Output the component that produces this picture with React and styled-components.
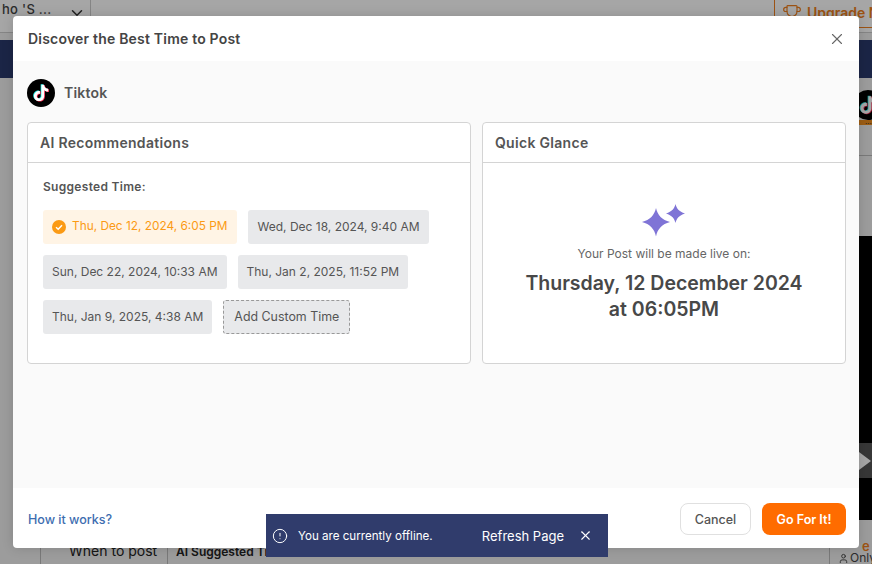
import React from "react";
import styled, { createGlobalStyle } from "styled-components";
import { ChevronDown, Trophy, User, X, CircleAlert } from "lucide-react";

const TIKTOK_PATH =
  "M12.525.02c1.31-.02 2.61-.01 3.91-.02.08 1.53.63 3.09 1.75 4.17 1.12 1.11 2.7 1.62 4.24 1.79v4.03c-1.44-.05-2.89-.35-4.2-.97-.57-.26-1.1-.59-1.62-.93-.01 2.92.01 5.84-.02 8.75-.08 1.4-.54 2.79-1.35 3.94-1.31 1.92-3.58 3.17-5.91 3.21-1.43.08-2.86-.31-4.08-1.03-2.02-1.19-3.44-3.37-3.65-5.71-.02-.5-.03-1-.01-1.49.18-1.9 1.12-3.72 2.58-4.96 1.66-1.44 3.98-2.13 6.15-1.72.02 1.48-.04 2.96-.04 4.44-.99-.32-2.15-.23-3.02.37-.63.41-1.11 1.04-1.36 1.75-.21.51-.15 1.07-.14 1.61.24 1.64 1.82 3.02 3.5 2.87 1.12-.01 2.19-.66 2.77-1.61.19-.33.4-.67.41-1.06.1-1.79.06-3.57.07-5.36.01-4.03-.01-8.05.02-12.07z";

const times = [
  { label: "Thu, Dec 12, 2024, 6:05 PM", selected: true },
  { label: "Wed, Dec 18, 2024, 9:40 AM" },
  { label: "Sun, Dec 22, 2024, 10:33 AM" },
  { label: "Thu, Jan 2, 2025, 11:52 PM" },
  { label: "Thu, Jan 9, 2025, 4:38 AM" },
];

const TiktokLogo = ({ size }) => (
  <svg width={size} height={size} viewBox="0 0 28 28">
    <circle cx="14" cy="14" r="14" fill="#000" />
    <g transform="translate(5.9 5.8) scale(0.68)">
      <path d={TIKTOK_PATH} fill="#25f4ee" transform="translate(-1.1 -0.7)" />
      <path d={TIKTOK_PATH} fill="#fe2c55" transform="translate(1.1 0.7)" />
      <path d={TIKTOK_PATH} fill="#fff" />
    </g>
  </svg>
);

const Sparkles = () => (
  <svg width="46" height="34" viewBox="0 0 46 34">
    <path
      d="M15 5 C16.5 12 21 17 29 19 C21 21 16.5 26 15 33.5 C13.5 26 9 21 1 19 C9 17 13.5 12 15 5 Z"
      fill="#7f74d6"
    />
    <path
      d="M34.5 1 C35.5 5.5 38 8.5 44 10.5 C38 12.5 35.5 15.5 34.5 20 C33.5 15.5 31 12.5 25 10.5 C31 8.5 33.5 5.5 34.5 1 Z"
      fill="#7f74d6"
    />
  </svg>
);

const CheckBadge = () => (
  <svg width="14" height="14" viewBox="0 0 14 14">
    <circle cx="7" cy="7" r="7" fill="#fb9a14" />
    <path d="M4 7.2 L6.2 9.3 L10 5.2" fill="none" stroke="#fff" strokeWidth="1.4" />
  </svg>
);

const App = () => (
  <Page>
    <GlobalStyle />
    <TopBar>
      <Workspace>
        <WorkspaceName>ho 'S ...</WorkspaceName>
        <ChevronDown size={18} color="#333" />
      </Workspace>
      <UpgradeButton>
        <Trophy size={20} strokeWidth={1.4} />
        Upgrade Now
      </UpgradeButton>
    </TopBar>
    <NavyBar />
    <Main>
      <SideColumn>
        <SideLogo>
          <TiktokLogo size={30} />
        </SideLogo>
        <SideStrip>...</SideStrip>
        <SideDivider />
        <VideoBlock>
          <PlayBox />
        </VideoBlock>
      </SideColumn>
    </Main>
    <BottomBar>
      <BottomTab>When to post</BottomTab>
      <BottomTabStrong>AI Suggested Time</BottomTabStrong>
      <BottomNote>
        <SideLabel>e</SideLabel>
        <OnlyRow>
          <User size={11} />
          Only
        </OnlyRow>
      </BottomNote>
    </BottomBar>
    <Overlay />
    <Modal>
      <ModalHeader>
        <ModalTitle>Discover the Best Time to Post</ModalTitle>
        <CloseButton>
          <X size={18} strokeWidth={1.5} />
        </CloseButton>
      </ModalHeader>
      <ModalBody>
        <Platform>
          <TiktokLogo size={28} />
          <PlatformName>Tiktok</PlatformName>
        </Platform>
        <Cards>
          <Card>
            <CardHeader>AI Recommendations</CardHeader>
            <RecommendBody>
              <SuggestLabel>Suggested Time:</SuggestLabel>
              <Chips>
                {times.map((t) => (
                  <Chip key={t.label} $selected={t.selected}>
                    {t.selected && <CheckBadge />}
                    {t.label}
                  </Chip>
                ))}
                <CustomChip>Add Custom Time</CustomChip>
              </Chips>
            </RecommendBody>
          </Card>
          <Card>
            <CardHeader>Quick Glance</CardHeader>
            <GlanceBody>
              <Sparkles />
              <GlanceText>Your Post will be made live on:</GlanceText>
              <GlanceDate>
                Thursday, 12 December 2024
                <br />
                at 06:05PM
              </GlanceDate>
            </GlanceBody>
          </Card>
        </Cards>
      </ModalBody>
      <ModalFooter>
        <HelpLink>How it works?</HelpLink>
        <FooterActions>
          <CancelButton>Cancel</CancelButton>
          <PrimaryButton>Go For It!</PrimaryButton>
        </FooterActions>
      </ModalFooter>
    </Modal>
    <Toast>
      <CircleAlert size={16} strokeWidth={1.5} />
      <ToastText>You are currently offline.</ToastText>
      <RefreshLink>Refresh Page</RefreshLink>
      <X size={15} strokeWidth={1.8} />
    </Toast>
  </Page>
);

export default App;

const GlobalStyle = createGlobalStyle`
  html, body {
    margin: 0;
    padding: 0;
    background: #f0f0f0;
  }
  * {
    box-sizing: border-box;
  }
`;

const Page = styled.div`
  position: relative;
  width: 872px;
  height: 564px;
  overflow: hidden;
  display: flex;
  flex-direction: column;
  background: #f0f0f0;
  font-family: Inter, "Liberation Sans", sans-serif;
  color: #444;
`;

const TopBar = styled.div`
  height: 33px;
  flex: none;
  display: flex;
  justify-content: space-between;
  align-items: flex-start;
  background: #fff;
  border-bottom: 1px solid #ccc;
  margin-bottom: 7px;
`;

const Workspace = styled.div`
  width: 91px;
  height: 32px;
  padding: 1px 4px 0 2px;
  display: flex;
  justify-content: space-between;
  align-items: flex-start;
  border-right: 1px solid #ccc;
  font-size: 13px;
  font-weight: 500;

  svg {
    margin-top: 3px;
  }
`;

const WorkspaceName = styled.span`
  white-space: nowrap;
  letter-spacing: 0.3px;
`;

const UpgradeButton = styled.div`
  width: 98px;
  height: 28px;
  padding: 4px 0 0 7px;
  display: flex;
  align-items: flex-start;
  gap: 5px;
  white-space: nowrap;
  overflow: hidden;
  border-left: 1px solid #f08020;
  border-bottom: 1px solid #f08020;
  color: #f08020;
  font-size: 14px;
  font-weight: 600;

  svg {
    flex: none;
  }
`;

const NavyBar = styled.div`
  height: 38px;
  flex: none;
  background: #2a3a6c;
`;

const Main = styled.div`
  flex: 1;
  display: flex;
  justify-content: flex-end;
  min-height: 0;
`;

const SideColumn = styled.div`
  width: 13px;
  display: flex;
  flex-direction: column;
  overflow: hidden;
`;

const SideLogo = styled.div`
  height: 42px;
  flex: none;
  padding-top: 12px;
  margin-left: -6px;
`;

const SideStrip = styled.div`
  height: 5px;
  flex: none;
  background: #f09020;
  color: #333;
  font-size: 8px;
  line-height: 2px;
  padding-left: 6px;
`;

const SideDivider = styled.div`
  height: 1px;
  flex: none;
  margin: 30px 0 80px;
  background: #bbb;
`;

const VideoBlock = styled.div`
  height: 284px;
  flex: none;
  padding-top: 207px;
  background: #000;
`;

const PlayBox = styled.div`
  height: 35px;
  display: flex;
  align-items: center;
  background: #555;

  &::before {
    content: "";
    border-style: solid;
    border-width: 9px 0 9px 12px;
    border-color: transparent transparent transparent #fff;
  }
`;

const BottomBar = styled.div`
  height: 24px;
  flex: none;
  display: flex;
  align-items: flex-start;
  margin-left: 40px;
  padding-left: 28px;
  border-left: 1px solid #bbb;
  font-size: 14px;
`;

const BottomTab = styled.span`
  width: 99px;
  height: 24px;
  margin-right: 8px;
  padding-top: 2px;
  border-right: 1px solid #bbb;
  color: #222;
`;

const BottomTabStrong = styled.span`
  padding-top: 4px;
  color: #222;
  font-size: 12px;
  font-weight: 600;
  white-space: nowrap;
`;

const BottomNote = styled.div`
  margin-left: auto;
  width: 43px;
  height: 24px;
  padding-left: 8px;
  border-left: 1px solid #bbb;
  display: flex;
  flex-direction: column;
  overflow: hidden;
`;

const SideLabel = styled.div`
  height: 12px;
  padding-left: 24px;
  line-height: 12px;
  color: #f08020;
  font-size: 13px;
  font-weight: 600;
`;

const OnlyRow = styled.div`
  display: flex;
  align-items: center;
  gap: 1px;
  line-height: 12px;
  font-size: 12px;

  svg {
    flex: none;
  }
`;

const Overlay = styled.div`
  position: absolute;
  inset: 0;
  background: rgba(0, 0, 0, 0.35);
`;

const Modal = styled.div`
  position: absolute;
  left: 13px;
  top: 16px;
  width: 846px;
  height: 532px;
  display: flex;
  flex-direction: column;
  background: #fff;
  border-radius: 4px;
  overflow: hidden;
  box-shadow: 0 0 12px rgba(0, 0, 0, 0.15);
`;

const ModalHeader = styled.div`
  height: 45px;
  flex: none;
  display: flex;
  align-items: center;
  justify-content: space-between;
  padding: 0 13px 0 15px;
`;

const ModalTitle = styled.h2`
  margin: 0;
  font-size: 14px;
  font-weight: 600;
  letter-spacing: 0.2px;
  color: #444;
`;

const CloseButton = styled.span`
  display: flex;
  color: #666;
`;

const ModalBody = styled.div`
  flex: 1;
  padding: 18px 13px 0 14px;
  background: #fafafa;
`;

const Platform = styled.div`
  display: flex;
  align-items: center;
  gap: 9px;
  margin-bottom: 15px;
`;

const PlatformName = styled.span`
  padding-bottom: 2px;
  font-size: 14px;
  font-weight: 600;
  letter-spacing: 0.2px;
  color: #555;
`;

const Cards = styled.div`
  display: grid;
  grid-template-columns: 444px 364px;
  gap: 11px;
`;

const Card = styled.div`
  height: 242px;
  background: #fff;
  border: 1px solid #d4d4d4;
  border-radius: 4px;
`;

const CardHeader = styled.div`
  height: 40px;
  display: flex;
  align-items: center;
  padding-left: 12px;
  border-bottom: 1px solid #d4d4d4;
  font-size: 14px;
  font-weight: 600;
  letter-spacing: 0.3px;
  color: #555;
`;

const RecommendBody = styled.div`
  padding: 16px 15px;
`;

const SuggestLabel = styled.div`
  margin-bottom: 16px;
  font-size: 12px;
  line-height: 15px;
  font-weight: 600;
  letter-spacing: 0.3px;
  color: #555;
`;

const Chips = styled.div`
  display: flex;
  flex-wrap: wrap;
  gap: 11px;
`;

const Chip = styled.div`
  height: 34px;
  display: flex;
  align-items: center;
  gap: 6px;
  padding: 0 ${(p) => (p.$selected ? "10px" : "9px")} 2px 9px;
  border-radius: 3px;
  white-space: nowrap;
  font-size: ${(p) => (p.$selected ? "11.85px" : "12px")};
  background: ${(p) => (p.$selected ? "#fff4e5" : "#e8e9eb")};
  color: ${(p) => (p.$selected ? "#fb9a14" : "#555")};

  svg {
    margin-top: 2px;
  }
`;

const CustomChip = styled(Chip)`
  padding: 0 10px 2px;
  border: 1px dashed #999;
  font-size: 12.4px;
`;

const GlanceBody = styled.div`
  padding-top: 40px;
  display: flex;
  flex-direction: column;
  align-items: center;
`;

const GlanceText = styled.div`
  margin-top: 9px;
  font-size: 12px;
  line-height: 16px;
  color: #666;
`;

const GlanceDate = styled.div`
  margin-top: 8px;
  font-size: 19.5px;
  line-height: 26px;
  font-weight: 600;
  text-align: center;
  color: #484848;
`;

const ModalFooter = styled.div`
  height: 60px;
  flex: none;
  display: flex;
  align-items: center;
  justify-content: space-between;
  padding: 2px 13px 0 15px;
`;

const HelpLink = styled.a`
  font-size: 12.5px;
  font-weight: 500;
  color: #3d6db0;
`;

const FooterActions = styled.div`
  display: flex;
  gap: 11px;
`;

const CancelButton = styled.button`
  width: 71px;
  height: 32px;
  border: 1px solid #e0e0e0;
  border-radius: 8px;
  background: #fff;
  font: 500 12.5px Inter, sans-serif;
  color: #555;
`;

const PrimaryButton = styled(CancelButton)`
  width: 84px;
  border: 0;
  background: #ff6c00;
  color: #fff;
  font-weight: 600;
`;

const Toast = styled.div`
  position: absolute;
  left: 266px;
  top: 514px;
  width: 342px;
  height: 43px;
  display: flex;
  align-items: center;
  padding: 0 15px 0 6px;
  background: #303c6c;
  color: #fff;
`;

const ToastText = styled.span`
  margin-left: 10px;
  font-size: 11.6px;
`;

const RefreshLink = styled.span`
  margin-left: auto;
  margin-right: 14px;
  font-size: 13px;
`;
